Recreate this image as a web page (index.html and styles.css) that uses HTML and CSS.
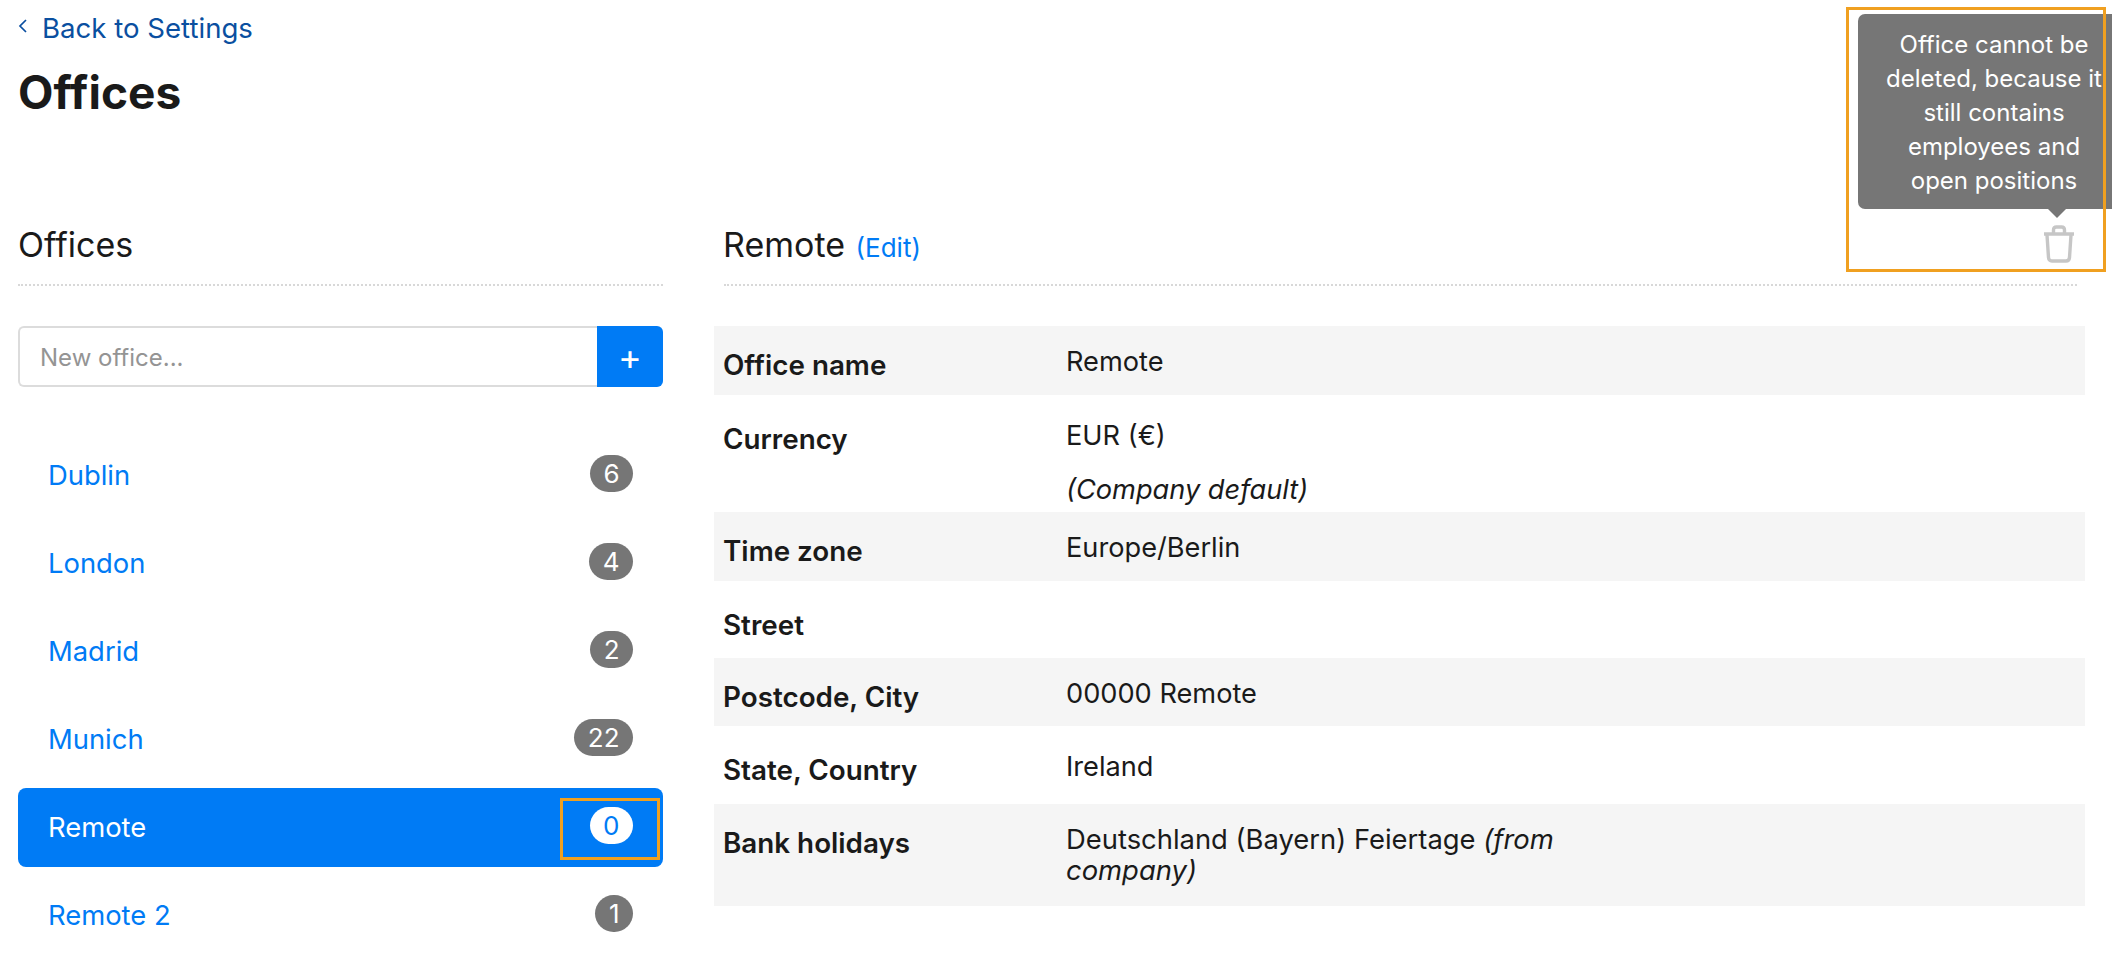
FILE: index.html
```html
<!DOCTYPE html>
<html lang="en">
<head>
<meta charset="utf-8">
<title>Offices</title>
<link rel="stylesheet" href="styles.css">
</head>
<body>
<header class="page-head">
  <a class="back" href="#"><svg class="chev" viewBox="0 0 10 18" width="10" height="18"><path d="M8 3 2 9l6 6" fill="none" stroke="currentColor" stroke-width="1.7"/></svg>Back to Settings</a>
  <h1>Offices</h1>
</header>
<main class="columns">
  <section class="left">
    <h2 class="sec-title">Offices</h2>
    <form class="new-office">
      <input type="text" placeholder="New office...">
      <button type="button">+</button>
    </form>
    <ul class="office-list">
      <li><a href="#">Dublin</a><span class="badge">6</span></li>
      <li><a href="#">London</a><span class="badge">4</span></li>
      <li><a href="#">Madrid</a><span class="badge">2</span></li>
      <li><a href="#">Munich</a><span class="badge">22</span></li>
      <li class="active"><a href="#">Remote</a><span class="badge">0<span class="mark mark-badge"></span></span></li>
      <li><a href="#">Remote 2</a><span class="badge">1</span></li>
    </ul>
  </section>
  <section class="right">
    <div class="sec-title detail-title">
      <h2>Remote <a href="#">(Edit)</a></h2>
      <span class="trash-wrap">
        <svg class="trash" viewBox="0 0 32 38" width="32" height="38"><path d="M1 9H31M10.500 8V5Q10.500 2 13.500 2H18.500Q21.500 2 21.500 5V8M4 10 5.500 32.500Q5.800 36 9 36H23Q26.200 36 26.500 32.500L28 10" fill="none" stroke="#c6c6c6" stroke-width="3.400"/></svg>
        <span class="tooltip">Office cannot be deleted, because it still contains employees and open positions</span>
        <span class="mark mark-trash"></span>
      </span>
    </div>
    <dl class="facts">
      <div class="fact"><dt>Office name</dt><dd>Remote</dd></div>
      <div class="fact"><dt>Currency</dt><dd>EUR (€)<em class="note">(Company default)</em></dd></div>
      <div class="fact"><dt>Time zone</dt><dd>Europe/Berlin</dd></div>
      <div class="fact"><dt>Street</dt><dd></dd></div>
      <div class="fact fact-short"><dt>Postcode, City</dt><dd>00000 Remote</dd></div>
      <div class="fact fact-tall"><dt>State, Country</dt><dd>Ireland</dd></div>
      <div class="fact fact-last"><dt>Bank holidays</dt><dd>Deutschland (Bayern) Feiertage <em>(from company)</em></dd></div>
    </dl>
  </section>
</main>
</body>
</html>
```
FILE: styles.css
```css
* { box-sizing: border-box; }
html, body { height: 100%; overflow: hidden; }
body { margin: 0; padding: 0 18px; font-family: Inter, "Liberation Sans", sans-serif; font-size: 27.200px; color: #1a1a1a; background: #fff; }
a { color: #007bf5; text-decoration: none; }
.page-head { height: 210px; padding-top: 9px; }
.back { display: flex; align-items: center; gap: 14px; height: 37px; color: #0a4fa0; font-size: 27.600px; }
.chev { margin-top: -4px; }
h1 { margin: 18px 0 0; font-size: 46px; line-height: 56px; font-weight: 700; color: #1a1a1a; }
.columns { display: flex; gap: 61px; align-items: flex-start; }
.left { width: 645px; flex: none; }
.right { flex: none; width: 1353px; }
.sec-title { display: flex; align-items: center; height: 76px; margin: 0 0 40px; padding-bottom: 6px; border-bottom: 2px dotted #d8d8d8; font-size: 34px; font-weight: 400; color: #1a1a1a; }
.detail-title { justify-content: space-between; }
.detail-title h2 { margin: 0 0 0 -1px; font-size: 34px; font-weight: 400; }
.detail-title a { margin-left: 1px; font-size: 26px; }
.new-office { display: flex; height: 61px; margin-bottom: 49px; }
.new-office input { flex: 1; min-width: 0; padding: 2px 20px 0; border: 2px solid #dcdcdc; border-right: 0; border-radius: 6px 0 0 6px; font: 24px Inter, sans-serif; color: #1a1a1a; outline: 0; }
.new-office input::placeholder { color: #949494; opacity: 1; }
.new-office button { width: 66px; border: 0; border-radius: 0 6px 6px 0; background: #007bf5; color: #fff; font: 400 36px Inter, sans-serif; padding: 0; }
.office-list { list-style: none; margin: 0; padding: 0; display: flex; flex-direction: column; gap: 9px; }
.office-list li { display: flex; justify-content: space-between; align-items: center; height: 79px; padding: 0 30px 2px; border-radius: 8px; font-size: 27.400px; }
.badge { position: relative; height: 37px; margin-top: -2px; padding: 0 13.500px; border-radius: 19px; display: flex; align-items: center; justify-content: center; background: #767676; color: #fff; font-size: 26px; }
.active { background: #007bf5; }
.active a { color: #fff; }
.active .badge { background: #fff; color: #007bf5; }
.mark { position: absolute; border: 3px solid #f0a020; pointer-events: none; }
.mark-badge { left: -30px; top: -9px; width: 100px; height: 62px; }
.trash-wrap { position: relative; display: flex; margin: 0 2px 0 0; }
.facts { margin: 0 0 0 -10px; width: 1371px; }
.fact { display: flex; align-items: flex-start; padding: 20px 10px 0; min-height: 69px; }
.fact:nth-child(odd) { background: #f5f5f5; }
.fact:nth-child(even) { min-height: 77px; padding: 25px 10px 7px; }
.fact.fact-short { min-height: 68px; }
.fact.fact-tall { min-height: 78px; }
.fact.fact-last { padding-bottom: 20px; font-size: 27.400px; }
.fact dt { width: 343px; margin-left: -1px; flex: none; font-size: 27.800px; font-weight: 600; padding-top: 2px; }
.fact dd { margin: 0; width: 500px; line-height: 31px; }
.note { display: block; margin-top: 23px; }
.tooltip { position: absolute; left: -185px; bottom: 54px; width: 270px; height: 195px; padding: 14px 20px 0 22px; background: #767676; color: #fff; border-radius: 7px; font-size: 24px; line-height: 34px; text-align: center; }
.tooltip::after { content: ""; position: absolute; left: 189px; bottom: -9px; border: 10px solid transparent; border-bottom: 0; border-top-color: #767676; }
.mark-trash { left: -197px; top: -218px; width: 260px; height: 265px; }
```
